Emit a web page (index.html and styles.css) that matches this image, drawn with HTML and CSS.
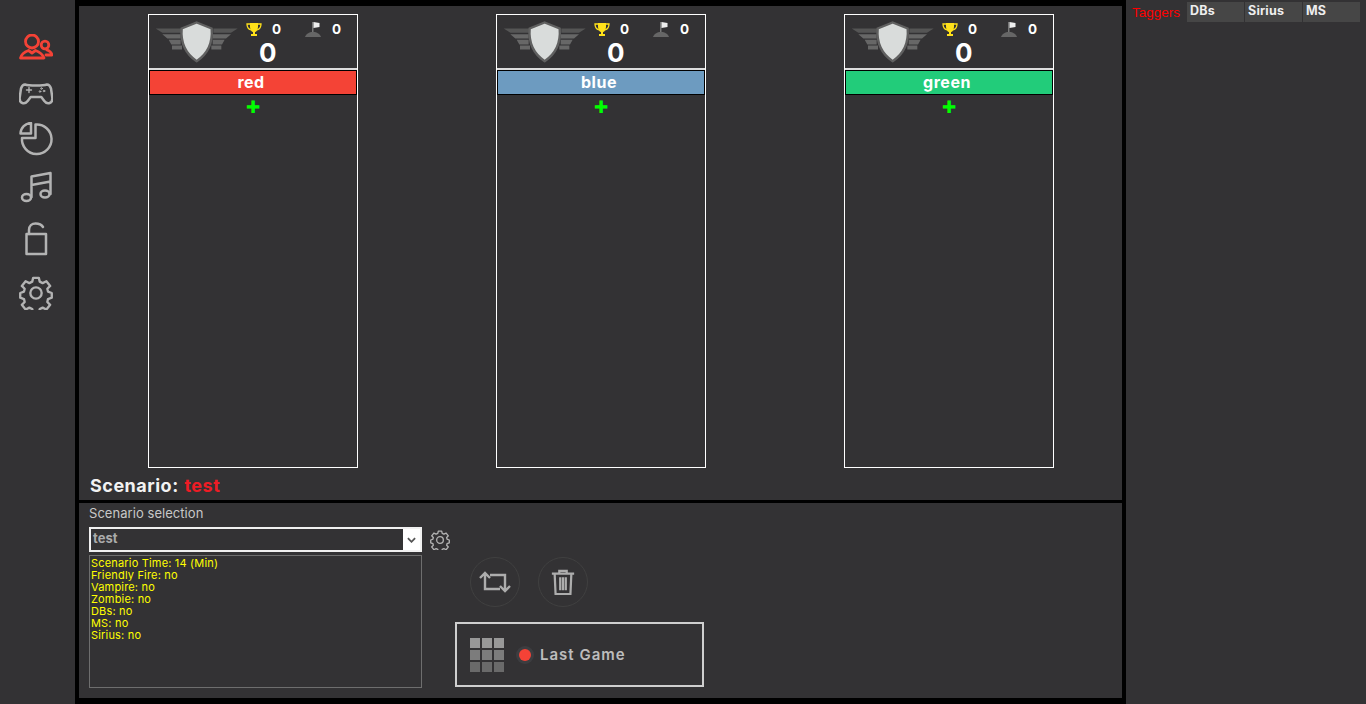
FILE: index.html
```html
<!DOCTYPE html>
<html lang="en">
<head>
<meta charset="utf-8">
<title>Game console</title>
<link rel="stylesheet" href="styles.css">
</head>
<body>
<svg class="defs" width="0" height="0" aria-hidden="true">
  <defs>
    <symbol id="shield" viewBox="15 18 255 128">
      <path d="M17 40H95V53H37zM190 40H263L243 53H190z" fill="#555"/>
      <path d="M37 57H92V70H52zM56 74H92V88H64zM66 91H96V103H66zM188 57H243L228 70H188zM188 74H224L216 88H188zM184 91H214V103H184z" fill="#676767"/>
      <path d="M140 22L185 40C189 88 170 118 140 138C110 118 91 88 95 40Z" fill="#d9dcdb" stroke="#606060" stroke-width="7"/>
    </symbol>
    <symbol id="trophy" viewBox="0 0 16 15">
      <path d="M4 1h8v4c0 3-2 5-3 5v2h2v2H5v-2h2v-2c-1 0-3-2-3-5z" fill="#ffe11a"/>
      <path d="M4 2H1c0 3 1 5 4 6M12 2h3c0 3-1 5-4 6" fill="none" stroke="#ffe11a" stroke-width="1.300"/>
    </symbol>
    <symbol id="flag" viewBox="0 0 18 17">
      <path d="M8 1h1.500v10H8z" fill="#777"/>
      <path d="M9.500 1l6 1v4l-6 1z" fill="#eee"/>
      <path d="M1 16c1-3 4-5 8-5s7 2 8 5z" fill="#666"/>
    </symbol>
  </defs>
</svg>
<div class="app">
  <nav class="sidebar">
    <svg class="nav-icon people active" viewBox="19 34 34 26"><circle cx="32" cy="41.500" r="6.500"/><circle cx="45" cy="45" r="3.800"/><path d="M20.500 58c1-4 4-6 8-7.500l3.500 2.500 3.500-2.500c4 1.500 7 3.500 8.500 7.500z"/><path d="M47 50c3 1 4.500 2.500 5 5h-6"/></svg>
    <svg class="nav-icon pad" viewBox="19 83 34 22"><path d="M25 84.500c3 1 6 1 11 1s8 0 11-1c2 0 3 1 4 4l1.300 9c.7 6-5 7.500-8 3.500l-3-4h-10.600l-3 4c-3 4-8.700 2.500-8-3.500l1.300-9c1-3 2-4 4-4z"/><path class="thin" d="M26.500 90h5M29 87.500v5"/><circle class="dot" cx="41.500" cy="88.500" r=".8"/><circle class="dot" cx="44" cy="91" r=".8"/><circle class="dot" cx="40" cy="91.500" r=".8"/></svg>
    <svg class="nav-icon pie" viewBox="19 122 34 34"><path d="M35.500 124.500A14.800 14.800 0 1 1 22 138H35.500Z"/><path d="M31 123V133.500H20.500A11 11 0 0 1 31 123Z"/></svg>
    <svg class="nav-icon music" viewBox="19 171 34 34"><ellipse cx="26.500" cy="197.500" rx="4.500" ry="3.500"/><ellipse cx="45" cy="194" rx="4.500" ry="3.500"/><path d="M31.500 197V176.500L50.500 173V194M31.500 185L50.500 181.500"/></svg>
    <svg class="nav-icon lock" viewBox="19 222 34 34"><path d="M26.500 234H46V254H26.500Z"/><path d="M29 234V230c0-4 3-6.500 6.500-6.500c3 0 6 1 7.500 3.500"/></svg>
    <svg class="nav-icon cog" viewBox="0 0 36 36"><circle cx="18" cy="18" r="6"/><path d="M15 2h6l1 4 3 1.500 4-2 4 5-3 3 .7 3 4 1.500v5l-4 1.500-.7 3 3 3-4 5-4-2-3 1.500-1 4h-6l-1-4-3-1.500-4 2-4-5 3-3-.7-3-4-1.500v-5l4-1.500.7-3-3-3 4-5 4 2 3-1.500z"/></svg>
  </nav>
  <main class="main">
    <section class="arena">
      <div class="teams">
        <article class="team">
          <header class="team-head">
            <svg class="shield"><use href="#shield"/></svg>
            <div class="score">
              <div class="stats">
                <svg class="trophy"><use href="#trophy"/></svg><span class="stat">0</span>
                <svg class="flag"><use href="#flag"/></svg><span class="stat">0</span>
              </div>
              <div class="total">0</div>
            </div>
          </header>
          <div class="team-name red">red</div>
          <div class="add">&#10010;</div>
        </article>
        <article class="team">
          <header class="team-head">
            <svg class="shield"><use href="#shield"/></svg>
            <div class="score">
              <div class="stats">
                <svg class="trophy"><use href="#trophy"/></svg><span class="stat">0</span>
                <svg class="flag"><use href="#flag"/></svg><span class="stat">0</span>
              </div>
              <div class="total">0</div>
            </div>
          </header>
          <div class="team-name blue">blue</div>
          <div class="add">&#10010;</div>
        </article>
        <article class="team">
          <header class="team-head">
            <svg class="shield"><use href="#shield"/></svg>
            <div class="score">
              <div class="stats">
                <svg class="trophy"><use href="#trophy"/></svg><span class="stat">0</span>
                <svg class="flag"><use href="#flag"/></svg><span class="stat">0</span>
              </div>
              <div class="total">0</div>
            </div>
          </header>
          <div class="team-name green">green</div>
          <div class="add">&#10010;</div>
        </article>
      </div>
      <h1 class="scenario-title">Scenario: <span>test</span></h1>
    </section>
    <section class="controls">
      <div class="selection">
        <div class="selection-label">Scenario selection</div>
        <div class="select-row">
          <div class="select"><span class="select-value">test</span><span class="select-arrow"><svg viewBox="0 0 10 6"><path d="M1 1l4 4 4-4"/></svg></span></div>
          <svg class="gear" viewBox="0 0 36 36"><circle cx="18" cy="18" r="6"/><path d="M15 2h6l1 4 3 1.500 4-2 4 5-3 3 .7 3 4 1.500v5l-4 1.500-.7 3 3 3-4 5-4-2-3 1.500-1 4h-6l-1-4-3-1.500-4 2-4-5 3-3-.7-3-4-1.500v-5l4-1.500.7-3-3-3 4-5 4 2 3-1.500z"/></svg>
        </div>
        <div class="details">
          <div>Scenario Time: 14 (Min)</div>
          <div>Friendly Fire: no</div>
          <div>Vampire: no</div>
          <div>Zombie: no</div>
          <div>DBs: no</div>
          <div>MS: no</div>
          <div>Sirius: no</div>
        </div>
      </div>
      <div class="actions">
        <div class="round-buttons">
          <button class="round"><svg viewBox="0 0 32 24"><path d="M1 8l5-5 5 5M6 4v15h15M31 16l-5 5-5-5M26 20V5H11"/></svg></button>
          <button class="round"><svg viewBox="0 0 26 28"><path d="M1 5h24M9 5V2h8v3M4 5l1 22h16l1-22M10 9v14M13 9v14M16 9v14"/></svg></button>
        </div>
        <div class="last-game">
          <div class="grid-icon">
            <i></i><i></i><i></i><i></i><i></i><i></i><i></i><i></i><i></i>
          </div>
          <span class="record"></span>
          <span class="last-label">Last Game</span>
        </div>
      </div>
    </section>
  </main>
  <aside class="right">
    <div class="tabs">
      <span class="tab-active">Taggers</span>
      <span class="tab">DBs</span>
      <span class="tab">Sirius</span>
      <span class="tab">MS</span>
    </div>
  </aside>
</div>
</body>
</html>
```
FILE: styles.css
```css
* { box-sizing: border-box; }
html, body { margin: 0; height: 100%; background: #000; overflow: hidden; }
body { font-family: Inter, "Open Sans", sans-serif; }
.defs { position: absolute; }
.app { display: flex; height: 704px; width: 1366px; }
.sidebar { width: 75px; background: #333234; display: flex; flex-direction: column; align-items: center; padding: 34px 3px 0 0; flex: none; }
.nav-icon { display: block; width: 34px; height: 34px; flex: none; fill: none; stroke: #b3b3b3; stroke-width: 2.500; stroke-linejoin: round; stroke-linecap: round; }
.nav-icon.active { stroke: #f44236; stroke-width: 2.800; }
.people { height: 26px; }
.pad { height: 22px; margin-top: 23px; }
.pie { margin-top: 17px; }
.music { margin-top: 15px; }
.lock { margin-top: 17px; }
.cog { margin-top: 20px; }
.thin { stroke-width: 1.400; }
.dot { stroke-width: 1; }
.main { width: 1043px; margin: 6px 4px; display: flex; flex-direction: column; gap: 3px; flex: none; height: 692px; }
.arena { height: 494px; background: #333234; display: flex; flex-direction: column; }
.teams { display: flex; padding: 8px 0 0 69px; gap: 138px; }
.team { width: 210px; height: 454px; border: 1px solid #fff; display: flex; flex-direction: column; }
.team-head { height: 55px; border-bottom: 2px solid #ddd; display: flex; padding: 6px 0 0 6px; flex: none; }
.shield { width: 85px; height: 43px; flex: none; }
.score { display: flex; flex-direction: column; width: 112px; }
.stats { display: flex; align-items: center; height: 16px; font-size: 13.500px; font-weight: 700; color: #fff; padding-left: 6px; }
.trophy { width: 16px; height: 15px; flex: none; }
.flag { width: 18px; height: 17px; margin-left: 22px; flex: none; }
.stat { margin-left: 10px; width: 10px; }
.total { font-size: 26px; line-height: 30px; font-weight: 700; color: #fff; margin: 1px 0 0 19px; }
.team-name { height: 25px; border: 1px solid #000; color: #fff; font-size: 16px; line-height: 23px; font-weight: 700; text-align: center; letter-spacing: .5px; padding-right: 4px; flex: none; }
.red { background: #f44336; }
.blue { background: #6d9bc0; }
.green { background: #22cc7a; }
.add { color: #0f0; font-size: 17px; line-height: 24px; text-align: center; font-family: "DejaVu Sans", sans-serif; }
.scenario-title { margin: 5px 0 0 11px; font-size: 18px; line-height: 26px; font-weight: 700; color: #f2f2f2; letter-spacing: .5px; }
.scenario-title span { color: #ee1c25; margin-left: 1px; }
.controls { height: 195px; background: #333234; display: flex; padding-left: 10px; }
.selection { width: 362px; flex: none; }
.selection-label { font-size: 13px; line-height: 16px; margin-top: 2px; color: #c8c8c8; letter-spacing: .05px; }
.select-row { display: flex; align-items: center; margin-top: 6px; }
.select { width: 333px; height: 25px; border: 2px solid #f0f0f0; display: flex; justify-content: space-between; }
.select-value { color: #aaa; font-size: 13px; font-weight: 700; line-height: 19px; padding-left: 2px; }
.select-arrow { width: 17px; background: #fff; display: flex; align-items: center; justify-content: center; }
.select-arrow svg { width: 9px; height: 6px; fill: none; stroke: #555; stroke-width: 2; }
.gear { width: 20px; height: 20px; margin-left: 8px; fill: none; stroke: #b3b3b3; stroke-width: 2.400; stroke-linejoin: round; }
.details { width: 333px; height: 133px; margin-top: 3px; border: 1px solid #6e6e6e; padding: 1px 1px; color: #ff0; font-size: 11px; line-height: 12px; letter-spacing: .18px; }
.actions { margin-left: 4px; padding-top: 54px; display: flex; flex-direction: column; }
.round-buttons { display: flex; gap: 18px; padding-left: 15px; }
.round { width: 50px; height: 50px; border: 1px solid #404040; border-radius: 50%; background: transparent; padding: 0; display: flex; align-items: center; justify-content: center; }
.round svg { width: 32px; height: 26px; fill: none; stroke: #adadad; stroke-width: 2.400; }
.last-game { width: 249px; height: 65px; margin-top: 15px; border: 2px solid #cfcfcf; display: flex; align-items: center; padding-left: 13px; }
.grid-icon { display: grid; grid-template-columns: repeat(3, 10px); grid-auto-rows: 10px; gap: 2px; width: 34px; margin-top: 1px; }
.grid-icon i { background: #7c7c7c; }
.grid-icon i:nth-child(-n+3) { background: #989898; }
.grid-icon i:nth-child(n+7) { background: #6a6a6a; }
.record { width: 12px; height: 12px; margin-left: 15px; border-radius: 50%; background: #f44236; box-shadow: 0 0 0 3px #3d3d40; flex: none; }
.last-label { margin-left: 9px; font-size: 15px; font-weight: 600; letter-spacing: 1px; color: #bdbdbd; }
.right { width: 240px; flex: none; background: #333234; height: 704px; }
.tabs { display: flex; padding: 2px 0 0 6px; }
.tab-active { width: 55px; color: #f00; font-family: "Liberation Sans", sans-serif; font-size: 13.500px; line-height: 21px; }
.tab { width: 58px; height: 20px; background: #464646; border-right: 1px solid #333234; color: #eee; font-size: 12.500px; font-weight: 700; line-height: 17px; padding-left: 3px; letter-spacing: .2px; }
```
